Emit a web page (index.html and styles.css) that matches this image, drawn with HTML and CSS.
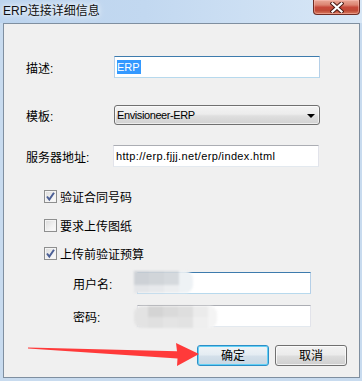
FILE: index.html
```html
<!DOCTYPE html>
<html lang="zh">
<head>
<meta charset="utf-8">
<title>ERP连接详细信息</title>
<link rel="stylesheet" href="styles.css">
</head>
<body>
<div class="window">
  <div class="titlebar">
    <span class="title">ERP连接详细信息</span>
    <div class="close">
      <svg width="14" height="11" viewBox="0 0 14 11">
        <path d="M2.5 1.5 L11.5 9.5 M11.5 1.5 L2.5 9.5" stroke="#4a1a14" stroke-width="4.2" stroke-linecap="square"/>
        <path d="M2.5 1.5 L11.5 9.5 M11.5 1.5 L2.5 9.5" stroke="#ffffff" stroke-width="2.2" stroke-linecap="square"/>
      </svg>
    </div>
  </div>
  <div class="client">
    <div class="row r1">
      <span class="lbl">描述:</span>
      <div class="field tb hot"><span class="selected">ERP</span></div>
    </div>
    <div class="row r2">
      <span class="lbl">模板:</span>
      <div class="field combo"><span class="lat tight">Envisioneer-ERP</span><span class="caret"></span></div>
    </div>
    <div class="row r3">
      <span class="lbl lbl-short">服务器地址:</span>
      <div class="field tb"><span class="lat wide">http://erp.fjjj.net/erp/index.html</span></div>
    </div>
    <div class="chk c1">
      <span class="box"><svg width="11" height="11" viewBox="0 0 11 11"><path d="M2 5.5 L4.3 8.5 L9 1.8" fill="none" stroke="#4b5f96" stroke-width="2"/></svg></span>
      <span>验证合同号码</span>
    </div>
    <div class="chk c2">
      <span class="box"></span>
      <span>要求上传图纸</span>
    </div>
    <div class="chk c3">
      <span class="box"><svg width="11" height="11" viewBox="0 0 11 11"><path d="M2 5.5 L4.3 8.5 L9 1.8" fill="none" stroke="#4b5f96" stroke-width="2"/></svg></span>
      <span>上传前验证预算</span>
    </div>
    <div class="row sub s1">
      <span class="lbl lbl-sub">用户名:</span>
      <div class="field tb hot small">
        <div class="blur blur-user">
          <span class="bq q1"></span><span class="bq q2"></span><span class="bq q3"></span><span class="bq q4"></span>
        </div>
      </div>
    </div>
    <div class="row sub s2">
      <span class="lbl lbl-sub">密码:</span>
      <div class="field tb small">
        <div class="blur blur-pass">
          <span class="bq p1"></span><span class="bq p2"></span><span class="bq p3"></span><span class="bq p4"></span><span class="bq p5"></span><span class="bq p6"></span>
        </div>
      </div>
    </div>
    <div class="btns">
      <div class="btn default">确定</div>
      <div class="btn">取消</div>
    </div>
  </div>
  <svg class="arrow" width="362" height="381" viewBox="0 0 362 381">
    <polygon points="28,347.6 177,351.2 176,343 199,354 177,366 177.5,358.6 28,348.6" fill="#ff3a3a"/>
  </svg>
</div>
</body>
</html>
```
FILE: styles.css
```css
html, body {
  margin: 0;
  padding: 0;
}
body {
  font-family: "Liberation Sans", "Noto Sans CJK SC", sans-serif;
  font-size: 12px;
  color: #000;
}
.window {
  width: 362px;
  height: 381px;
  background: #c8dbef;
  display: flex;
  flex-direction: column;
  position: relative;
  overflow: hidden;
}
.titlebar {
  height: 23px;
  flex: none;
  display: flex;
  justify-content: space-between;
  align-items: flex-start;
  background: linear-gradient(90deg, #bcd4ee 0%, #c2d8f0 40%, #cfe1f4 75%, #d8e7f6 100%);
}
.title {
  margin: 3px 0 0 3px;
  line-height: 16px;
  font-size: 12px;
  color: #111;
  text-shadow: 0 0 5px #fff, 0 0 9px rgba(255,255,255,0.9);
}
.close {
  width: 47px;
  height: 15px;
  margin-right: 2px;
  box-sizing: border-box;
  border: 1px solid #6f2c23;
  border-top: none;
  border-radius: 0 0 4px 4px;
  background: linear-gradient(#eaa898 0%, #dc8572 35%, #c7493a 52%, #c04a36 75%, #d87a5e 100%);
  box-shadow: inset 0 0 0 1px rgba(255,200,190,0.45);
  display: flex;
  align-items: center;
  justify-content: center;
}
.client {
  flex: 1;
  margin: 0 2px 3px 3px;
  border: 1px solid #7f8fa0;
  background: #f0f0f0;
  padding-left: 22px;
  display: flex;
  flex-direction: column;
}
.row {
  display: flex;
  align-items: center;
}
.lbl {
  width: 88px;
  flex: none;
}
.lbl-short {
  width: 87px;
}
.field {
  box-sizing: border-box;
  width: 206px;
  height: 22px;
  display: flex;
  align-items: center;
  position: relative;
}
.tb {
  background: #fff;
  border: 1px solid;
  border-color: #abadb3 #e2e3ea #e3e9ef #e2e3ea;
  padding-left: 2px;
}
.tb.hot {
  border-color: #3d7bad #b5cfe7 #b7d9ed #b5cfe7;
}
.r1 { margin-top: 32px; }
.r2 { margin-top: 27px; }
.r3 { margin-top: 20px; }
.selected {
  background: #3399ff;
  color: #fff;
  font-size: 11px;
  line-height: 14px;
  padding: 0 1px 0 0;
}
.lat {
  font-size: 11px;
}
.tight { letter-spacing: -0.4px; }
.wide { letter-spacing: 0.35px; }
.combo {
  height: 20px;
  border: 1px solid #707070;
  border-radius: 3px;
  background: linear-gradient(#f3f3f3 0%, #ececec 45%, #dfdfdf 55%, #d2d2d2 100%);
  box-shadow: inset 0 0 0 1px rgba(255,255,255,0.6);
  justify-content: space-between;
  padding: 0 4px 0 2px;
}
.caret {
  width: 0;
  height: 0;
  border-left: 4px solid transparent;
  border-right: 4px solid transparent;
  border-top: 4px solid #000;
  margin-top: 1px;
}
.chk {
  margin-left: 18px;
  height: 16px;
  display: flex;
  align-items: center;
  gap: 3px;
}
.c1 { margin-top: 21px; }
.c2 { margin-top: 13px; }
.c3 { margin-top: 12px; }
.box {
  box-sizing: border-box;
  width: 13px;
  height: 13px;
  border: 1px solid #8e8f8f;
  background: linear-gradient(135deg, #dadada 0%, #f2f2f2 60%, #fbfbfb 100%);
  box-shadow: inset 0 0 0 1px #f4f4f4;
  display: flex;
  align-items: center;
  justify-content: center;
}
.sub {
  margin-left: 47px;
}
.lbl-sub {
  width: 64px;
}
.small {
  width: 174px;
}
.s1 { margin-top: 11px; }
.s2 { margin-top: 11px; }
.blur {
  position: absolute;
  display: flex;
  filter: blur(0.8px);
}
.blur-user {
  left: -4px;
  top: -2px;
  height: 22px;
}
.bq {
  display: block;
  width: 15px;
  height: 100%;
}
.q1 { background: linear-gradient(#cdd1d6 0 65%, #e4e6e9 65%); }
.q2 { background: linear-gradient(#d1d5d9 0 65%, #e7e9ec 65%); }
.q3 { background: linear-gradient(#d5d9dd 0 65%, #eceef0 65%); }
.q4 { width: 14px; background: #eef2f5; border-radius: 0 8px 8px 0; }
.blur-pass {
  left: -4px;
  top: 0;
  height: 22px;
}
.p1 { width: 14px; background: #e3e3e3; border-radius: 8px 0 0 8px; }
.p2 { background: linear-gradient(#d4d4d4 0 50%, #e0e0e0 50%); }
.p3 { background: linear-gradient(#dadada 0 50%, #e4e4e4 50%); }
.p4 { background: linear-gradient(#dedede 0 50%, #e2e2e2 50%); }
.p5 { background: linear-gradient(#ebebeb 0 50%, #efefef 50%); }
.p6 { width: 9px; background: #f4f4f4; border-radius: 0 8px 8px 0; }
.btns {
  margin-top: 18px;
  display: flex;
  justify-content: flex-end;
  gap: 6px;
  padding-right: 12px;
}
.btn {
  box-sizing: border-box;
  width: 72px;
  height: 21px;
  border: 1px solid #707070;
  border-radius: 3px;
  background: linear-gradient(#f2f2f2 0%, #ebebeb 48%, #dddddd 52%, #cfcfcf 100%);
  box-shadow: inset 0 0 0 1px rgba(255,255,255,0.7);
  display: flex;
  align-items: center;
  justify-content: center;
  line-height: 14px;
}
.btn.default {
  border-color: #2d8fc7;
  background: linear-gradient(#f0f4f7 0%, #e4ecf2 48%, #d4e0ea 52%, #c8d7e3 100%);
  box-shadow: inset 0 0 0 1px #63d0f5;
}
.arrow {
  position: absolute;
  left: 0;
  top: 0;
  pointer-events: none;
}
```
